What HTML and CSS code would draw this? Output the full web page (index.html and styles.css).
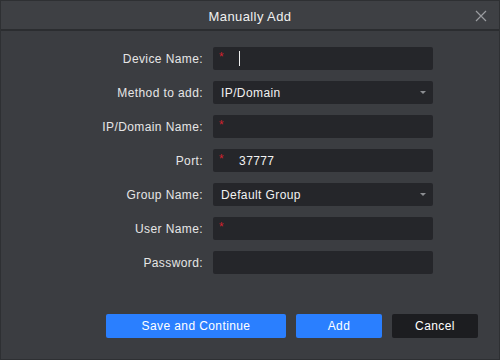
FILE: index.html
```html
<!DOCTYPE html>
<html lang="en">
<head>
    <meta charset="UTF-8">
    <title>Manually Add</title>
    <link rel="stylesheet" href="styles.css">
</head>
<body>
    <div class="dialog">
        <div class="titlebar">
            <span class="title">Manually Add</span>
            <svg class="close" width="12" height="12" viewBox="0 0 12 12">
                <path d="M1 1L11 11M11 1L1 11" stroke="#9a9ca0" stroke-width="1.2" fill="none"/>
            </svg>
        </div>
        <div class="form">
            <div class="row">
                <label>Device Name:</label>
                <div class="field"><span class="star">*</span><span class="caret"></span></div>
            </div>
            <div class="row">
                <label>Method to add:</label>
                <div class="field select"><span class="val">IP/Domain</span><span class="arrow"></span></div>
            </div>
            <div class="row">
                <label>IP/Domain Name:</label>
                <div class="field"><span class="star">*</span></div>
            </div>
            <div class="row">
                <label>Port:</label>
                <div class="field"><span class="star">*</span><span class="text">37777</span></div>
            </div>
            <div class="row">
                <label>Group Name:</label>
                <div class="field select"><span class="val">Default Group</span><span class="arrow"></span></div>
            </div>
            <div class="row">
                <label>User Name:</label>
                <div class="field"><span class="star">*</span></div>
            </div>
            <div class="row">
                <label>Password:</label>
                <div class="field"></div>
            </div>
        </div>
        <div class="buttons">
            <button class="btn blue wide">Save and Continue</button>
            <button class="btn blue">Add</button>
            <button class="btn dark">Cancel</button>
        </div>
    </div>
</body>
</html>
```
FILE: styles.css
```css
html,body{
    margin:0;
    padding:0;
    width:500px;
    height:360px;
    background:#3a3c40;
    font-family:"Liberation Sans", Arial, sans-serif;
    font-size:12px;
    letter-spacing:0.4px;
    overflow:hidden;
}
.dialog{
    box-sizing:border-box;
    width:500px;
    height:360px;
    border:1px solid #2e3033;
    background:#3b3d41;
    display:flex;
    flex-direction:column;
}
.titlebar{
    height:28px;
    border-bottom:2px solid #2b2d30;
    background:#3e4044;
    display:flex;
    align-items:center;
    justify-content:center;
    position:relative;
}
.title{
    color:#f0f0f0;
    font-size:13px;
    margin-top:2px;
}
.close{
    position:absolute;
    right:12px;
    top:9px;
}
.form{
    padding-top:16px;
    display:flex;
    flex-direction:column;
    gap:11px;
}
.row{
    display:flex;
    align-items:center;
    height:23px;
}
.row label{
    width:212px;
    flex-shrink:0;
    text-align:right;
    color:#e6e6e6;
    padding-right:10px;
    box-sizing:border-box;
}
.field{
    width:220px;
    height:23px;
    background:#25262a;
    border-radius:2px;
    display:flex;
    align-items:center;
    position:relative;
    color:#f2f2f2;
}
.star{
    color:#d0222e;
    margin-left:6px;
    font-size:12px;
    line-height:12px;
    position:relative;
    top:-2px;
}
.caret{
    width:1px;
    height:15px;
    background:#eeeeee;
    margin-left:15px;
}
.text{
    margin-left:15px;
}
.select .val{
    margin-left:8px;
}
.arrow{
    position:absolute;
    right:7px;
    top:10px;
    border-left:3px solid transparent;
    border-right:3px solid transparent;
    border-top:3px solid #8c8e92;
}
.buttons{
    margin-top:auto;
    margin-bottom:21px;
    display:flex;
    gap:10px;
    padding-left:105px;
}
.btn{
    height:24px;
    border:none;
    border-radius:2px;
    color:#ffffff;
    font-family:"Liberation Sans", Arial, sans-serif;
    font-size:12px;
    letter-spacing:0.4px;
    width:86px;
    padding:0;
}
.blue{
    background:#2a7fff;
}
.wide{
    width:180px;
}
.dark{
    background:#1c1d20;
}
```
